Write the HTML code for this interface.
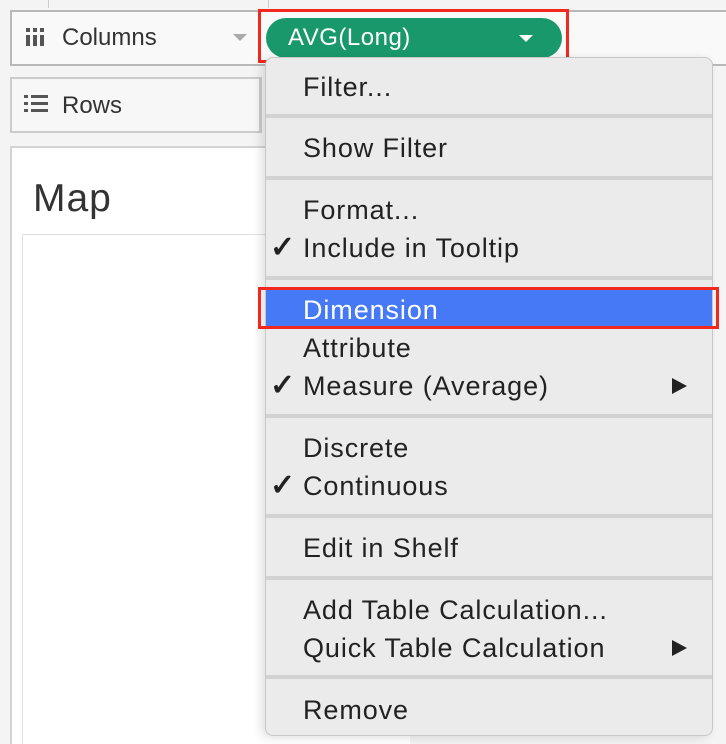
<!DOCTYPE html>
<html><head><meta charset="utf-8"><style>
*{margin:0;padding:0;box-sizing:border-box}
html,body{width:726px;height:744px;overflow:hidden}
body{background:#f4f4f4;position:relative;font-family:"Liberation Sans",sans-serif;color:#222}
.a{position:absolute}
.it{position:absolute;left:303px;font-size:27px;letter-spacing:0.9px;line-height:38px;white-space:nowrap}
.ck{position:absolute;left:270px;font-size:30px;font-weight:bold;line-height:38px}
.sep{position:absolute;left:266px;width:446px;height:4px;background:#d2d2d2}
.arr{position:absolute;left:672px;width:0;height:0;border-top:8px solid transparent;border-bottom:8px solid transparent;border-left:15px solid #222}
</style></head><body>
<div class="a" style="left:48px;top:0;width:1px;height:8px;background:#ccc"></div>
<div class="a" style="left:268px;top:0;width:1px;height:8px;background:#ccc"></div>
<div class="a" style="left:10px;top:10px;width:730px;height:56px;border:2px solid #b8b8b8;background:#f9f9f9"></div>
<div class="a" style="left:26px;top:28px;width:20px;height:18px">
<div class="a" style="left:0;top:0;width:4px;height:4px;background:#555"></div><div class="a" style="left:0;top:7px;width:4px;height:11px;background:#555"></div>
<div class="a" style="left:7px;top:0;width:4px;height:4px;background:#555"></div><div class="a" style="left:7px;top:7px;width:4px;height:11px;background:#555"></div>
<div class="a" style="left:14px;top:0;width:4px;height:4px;background:#555"></div><div class="a" style="left:14px;top:7px;width:4px;height:11px;background:#555"></div>
</div>
<div class="a" style="left:62px;top:22px;font-size:24px;line-height:32px;color:#333">Columns</div>
<div class="a" style="left:233px;top:34px;border-left:7px solid transparent;border-right:7px solid transparent;border-top:7px solid #aaa"></div>
<div class="a" style="left:10px;top:77px;width:252px;height:56px;border:2px solid #ccc;background:#f7f7f7"></div>
<div class="a" style="left:259px;top:77px;width:2px;height:56px;background:#ccc"></div>
<div class="a" style="left:24px;top:95px;width:24px;height:18px">
<div class="a" style="left:0;top:0;width:4px;height:3px;background:#555"></div><div class="a" style="left:7px;top:0;width:17px;height:3px;background:#555"></div>
<div class="a" style="left:0;top:7px;width:4px;height:3px;background:#555"></div><div class="a" style="left:7px;top:7px;width:17px;height:3px;background:#555"></div>
<div class="a" style="left:0;top:14px;width:4px;height:3px;background:#555"></div><div class="a" style="left:7px;top:14px;width:17px;height:3px;background:#555"></div>
</div>
<div class="a" style="left:62px;top:90px;font-size:24px;line-height:32px;color:#333">Rows</div>
<div class="a" style="left:10px;top:146px;width:400px;height:620px;border:2px solid #d4d4d4;border-right:none;background:#fff"></div>
<div class="a" style="left:33px;top:176px;font-size:39px;line-height:46px;color:#333;letter-spacing:1px">Map</div>
<div class="a" style="left:22px;top:234px;width:380px;height:520px;border-left:1px solid #e0e0e0;border-top:1px solid #e0e0e0"></div>
<div class="a" style="left:258px;top:9px;width:311px;height:54px;border:3px solid #f0281e"></div>
<div class="a" style="left:266px;top:18px;width:296px;height:40px;border-radius:20px;background:#19996b"></div>
<div class="a" style="left:288px;top:21px;font-size:24px;line-height:34px;color:#fff;letter-spacing:0.5px">AVG(Long)</div>
<div class="a" style="left:519px;top:35px;border-left:7px solid transparent;border-right:7px solid transparent;border-top:7px solid #fff"></div>
<div class="a" style="left:265px;top:57px;width:448px;height:679px;background:#ebebeb;border:1px solid #c8c8c8;border-radius:8px;box-shadow:-4px 2px 10px rgba(0,0,0,0.12)"></div>
<div class="it" style="top:68px">Filter...</div>
<div class="sep" style="top:114px"></div>
<div class="it" style="top:129px">Show Filter</div>
<div class="sep" style="top:176px"></div>
<div class="it" style="top:191px">Format...</div>
<div class="ck" style="top:229px">✓</div><div class="it" style="top:229px">Include in Tooltip</div>
<div class="sep" style="top:276px"></div>
<div class="a" style="left:266px;top:290px;width:446px;height:36px;background:#4579f5"></div>
<div class="a" style="left:258px;top:287px;width:461px;height:42px;border:3px solid #f0281e"></div>
<div class="it" style="top:291px;color:#fff">Dimension</div>
<div class="it" style="top:329px">Attribute</div>
<div class="ck" style="top:367px">✓</div><div class="it" style="top:367px">Measure (Average)</div>
<div class="arr" style="top:378px"></div>
<div class="sep" style="top:414px"></div>
<div class="it" style="top:429px">Discrete</div>
<div class="ck" style="top:467px">✓</div><div class="it" style="top:467px">Continuous</div>
<div class="sep" style="top:514px"></div>
<div class="it" style="top:529px">Edit in Shelf</div>
<div class="sep" style="top:576px"></div>
<div class="it" style="top:591px">Add Table Calculation...</div>
<div class="it" style="top:629px">Quick Table Calculation</div>
<div class="arr" style="top:640px"></div>
<div class="sep" style="top:675px"></div>
<div class="it" style="top:691px">Remove</div>
</body></html>
